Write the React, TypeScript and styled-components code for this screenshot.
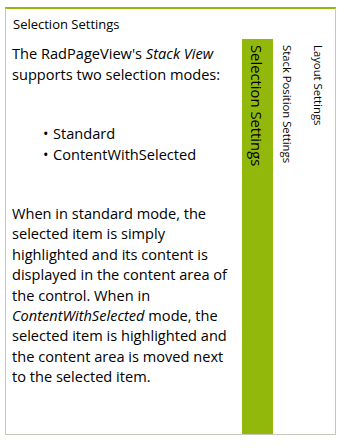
import styled, { createGlobalStyle } from "styled-components";

const GlobalStyle = createGlobalStyle`
  html, body {
    margin: 0;
    padding: 0;
    background: #ffffff;
  }
  body {
    font-family: "Open Sans", "Noto Sans", sans-serif;
    color: #000000;
  }
`;

const Frame = styled.div`
  margin: 7px 0 0 5px;
  width: 331px;
  height: 428px;
  box-sizing: border-box;
  border: 1px solid #c7c7b9;
  border-top: 2px solid #92b80c;
  display: flex;
  flex-direction: column;
`;

const Header = styled.div`
  height: 30px;
  line-height: 30px;
  padding-left: 7px;
  font-size: 13px;
  flex: none;
`;

const Body = styled.div`
  flex: 1;
  display: flex;
  min-height: 0;
`;

const Content = styled.div`
  width: 236px;
  box-sizing: border-box;
  padding: 4px 0 0 6px;
  font-size: 14.6px;
  line-height: 21px;
  white-space: nowrap;
`;

const Paragraph = styled.p<{ $top: number; $lh: number }>`
  margin: ${(p) => p.$top}px 0 0;
  line-height: ${(p) => p.$lh}px;
`;

const List = styled.ul`
  list-style: none;
  margin: 38px 0 0;
  padding: 0 0 0 31px;
  line-height: 21px;
`;

const Item = styled.li`
  display: flex;
  &::before {
    content: "•";
    width: 10px;
    flex: none;
  }
`;

const Strip = styled.div`
  display: flex;
  flex: none;
`;

const Tab = styled.div<{ $selected?: boolean }>`
  width: 31px;
  box-sizing: border-box;
  padding: 6px 2px 0 0;
  display: flex;
  justify-content: center;
  background: ${(p) => (p.$selected ? "#92b80c" : "transparent")};
  font-size: ${(p) => (p.$selected ? "14.8px" : "11.3px")};
`;

const TabLabel = styled.span`
  writing-mode: vertical-rl;
  white-space: nowrap;
`;

export default function App() {
  return (
    <>
      <GlobalStyle />
      <Frame>
        <Header>Selection Settings</Header>
        <Body>
          <Content>
            <Paragraph $top={0} $lh={21}>
              The RadPageView's <i>Stack View</i>
              <br />
              supports two selection modes:
            </Paragraph>
            <List>
              <Item>Standard</Item>
              <Item>ContentWithSelected</Item>
            </List>
            <Paragraph $top={38} $lh={20.4}>
              When in standard mode, the
              <br />
              selected item is simply
              <br />
              highlighted and its content is
              <br />
              displayed in the content area of
              <br />
              the control. When in
              <br />
              <i>ContentWithSelected</i> mode, the
              <br />
              selected item is highlighted and
              <br />
              the content area is moved next
              <br />
              to the selected item.
            </Paragraph>
          </Content>
          <Strip>
            <Tab $selected>
              <TabLabel>Selection Settings</TabLabel>
            </Tab>
            <Tab>
              <TabLabel>Stack Position Settings</TabLabel>
            </Tab>
            <Tab>
              <TabLabel>Layout Settings</TabLabel>
            </Tab>
          </Strip>
        </Body>
      </Frame>
    </>
  );
}
